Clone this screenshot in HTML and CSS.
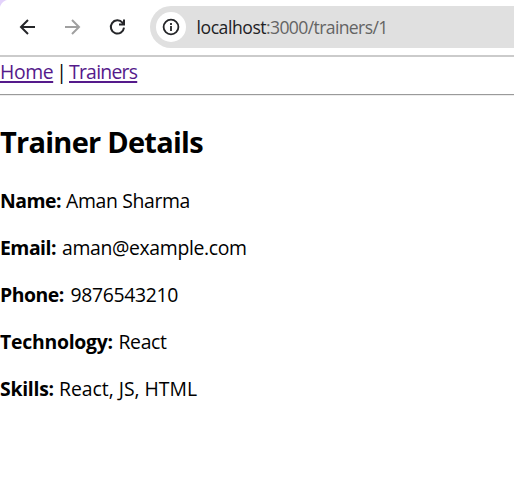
FILE: index.html
```html
<!DOCTYPE html>
<html lang="en">
<head>
<meta charset="utf-8">
<title>Trainer Details</title>
<link rel="stylesheet" href="styles.css">
</head>
<body>
<header class="toolbar">
  <svg class="nav-icon" viewBox="0 0 18 18"><path d="M17 9H3M10 2 3 9 10 16"/></svg>
  <svg class="nav-icon disabled" viewBox="0 0 18 18"><path d="M2 9h14M9 2 16 9 9 16"/></svg>
  <svg class="nav-icon" viewBox="0 0 18 18"><path d="M16 9.7A6.6 6.6 0 1 1 14.5 4.7L16 6.2M16 1.5V6.4H11"/></svg>
  <div class="address">
    <span class="info"><svg viewBox="0 0 18 18"><circle cx="9" cy="9" r="7.4"/><path d="M9 8v5M9 5v2"/></svg></span>
    <span class="url"><span class="host">localhost</span><span class="path">:3000/trainers/1</span></span>
  </div>
</header>
<main class="page">
  <nav class="links"><a class="home" href="#">Home</a><span class="bar">|</span><a class="trainers" href="#">Trainers</a></nav>
  <hr class="rule">
  <h2 class="title">Trainer Details</h2>
  <p class="row"><b class="name">Name:</b><span class="v-name">Aman Sharma</span></p>
  <p class="row"><b class="email">Email:</b><span class="v-email">aman@example.com</span></p>
  <p class="row"><b class="phone">Phone:</b><span class="v-phone">9876543210</span></p>
  <p class="row"><b class="tech">Technology:</b><span class="v-tech">React</span></p>
  <p class="row"><b class="skills">Skills:</b><span class="v-skills">React, JS, HTML</span></p>
</main>
</body>
</html>
```

FILE: styles.css
```css
* { box-sizing: border-box; }
body {
  margin: 0;
  background: #fff;
  color: #000;
  font-family: "Open Sans", "Noto Sans", sans-serif;
  font-size: 19.4px;
  line-height: 27px;
  overflow: hidden;
}
.toolbar {
  display: flex;
  align-items: center;
  height: 57px;
  padding: 0 0 1px 18px;
  border-bottom: 2px solid #cbcbcb;
  background: radial-gradient(circle at 10px 10px, #fff 10px, #e3d2fb 11px) 0 0 / 10px 10px no-repeat;
}
.nav-icon {
  width: 18px;
  height: 18px;
  margin: 0 27px 1px 0;
  flex: none;
  fill: none;
  stroke: #252629;
  stroke-width: 2;
}
.disabled { stroke: #a0a0a0; }
.address {
  display: flex;
  align-items: center;
  flex: 1;
  height: 42px;
  margin-left: -3px;
  padding-left: 6px;
  background: #e0e0e0;
  border-radius: 21px 0 0 21px;
}
.info {
  display: flex;
  align-items: center;
  justify-content: center;
  width: 30px;
  height: 30px;
  border-radius: 50%;
  background: #fff;
}
.info svg { width: 18px; height: 18px; fill: none; stroke: #252629; stroke-width: 1.8; }
.url { display: flex; margin-left: 10.5px; font-size: 17.6px; white-space: nowrap; }
.host { width: 69.5px; color: #202124; letter-spacing: -.45px; }
.path { color: #646464; letter-spacing: -.63px; }
.page { padding-top: 1px; }
.links, .row { display: flex; white-space: nowrap; }
.links a { color: #551a8b; text-decoration: underline; text-decoration-thickness: 2px; text-underline-offset: 2px; }
.links a { letter-spacing: -.4px; }
.links .trainers { letter-spacing: -.75px; }
.row span { letter-spacing: -.35px; }
.row b { letter-spacing: -.5px; }
.home { width: 54px; }
.bar { width: 15px; text-align: center; }
.rule { margin: 9px 0 0; height: 2px; border: 0; border-top: 1px solid #9a9a9a; background: #ededed; }
.title {
  margin: 26px 0 0;
  font-size: 29px;
  line-height: 40px;
  font-weight: 700;
  letter-spacing: -.75px;
}
.row { margin: 25px 0 20px; }
.row + .row { margin-top: 0; }
.name { width: 66px; }
.email { width: 62px; }
.phone { width: 70.5px; }
.row .tech { width: 118.5px; letter-spacing: -.25px; }
.row .skills { width: 59px; letter-spacing: -.25px; }
.row .v-skills { letter-spacing: -.02px; }
```
